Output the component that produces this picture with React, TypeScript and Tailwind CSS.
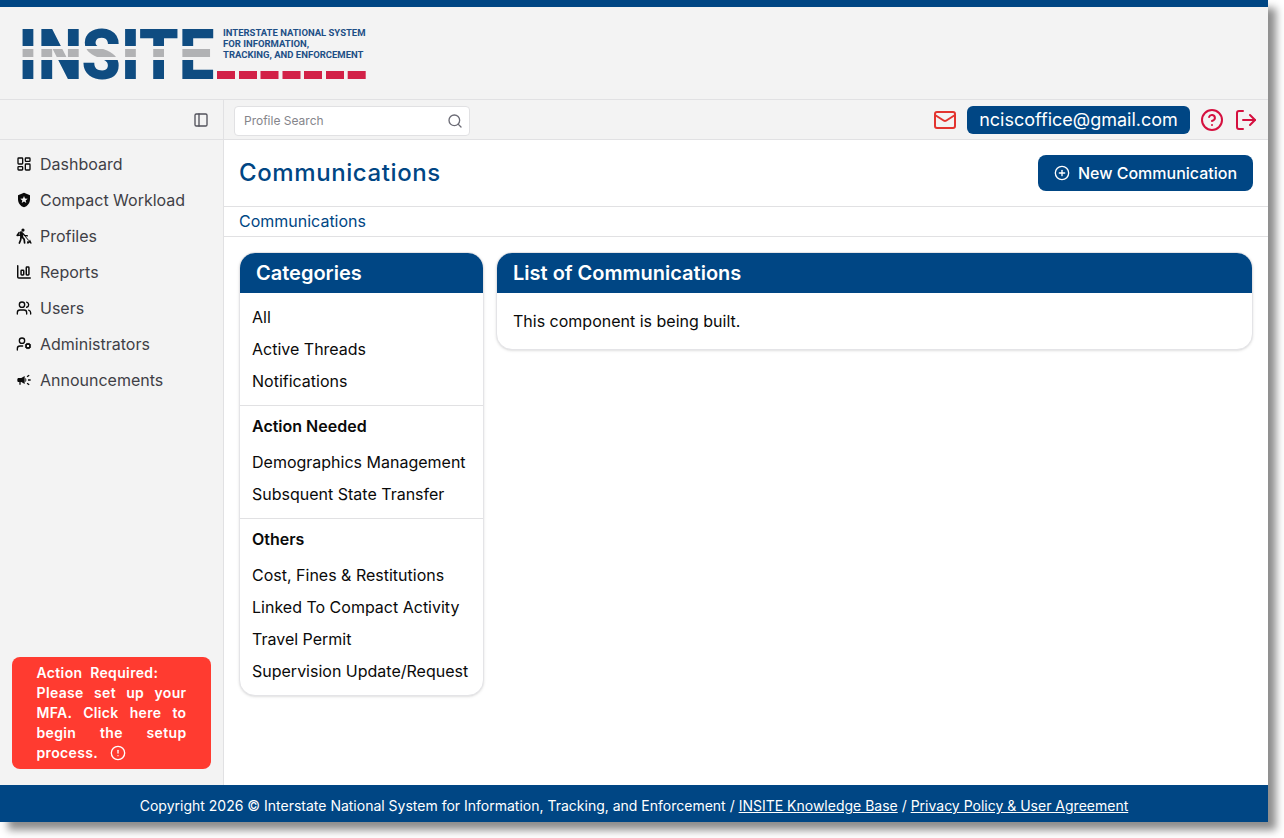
import { CirclePlus, CircleAlert, CircleHelp, LayoutDashboard, LogOut, Mail, PanelLeft, Search, UserCog, Users } from 'lucide-react'
import { MdCampaign, MdLocalPolice } from 'react-icons/md'

function WorkerIcon({ className }: { className?: string }) {
    return (
        <svg className={className} viewBox="0 0 16 16" fill="none" stroke="currentColor" strokeLinecap="round" strokeLinejoin="round">
            <circle cx="7" cy="2.1" r="1.6" fill="currentColor" stroke="none" />
            <path d="M5.1 4.9 5.7 8.6" strokeWidth="3.2" />
            <path d="M3 4.6 1.1 7.4 3.4 7.3" strokeWidth="1.5" />
            <path d="M6.6 5.2 8.6 7.4 11.2 7.8" strokeWidth="1.4" />
            <path d="M5 9.4 4.6 12 3.4 15M6.4 9.2 8.2 11.4 8.6 15" strokeWidth="1.7" />
            <path d="M8.6 7.6 12.6 12.4" strokeWidth="1" />
            <path d="m10.8 15.6.8-2.8 1.2.6 1.2-2 1.8 4.2h-1.6l-.6-1-1 1Z" fill="currentColor" stroke="none" />
        </svg>
    )
}

function ReportIcon({ className }: { className?: string }) {
    return (
        <svg className={className} viewBox="0 0 24 24" fill="none" stroke="currentColor" strokeWidth="2.2" strokeLinecap="round" strokeLinejoin="round">
            <path d="M2.6 2.6v16.8a1.6 1.6 0 0 0 1.6 1.6h17.2" />
            <rect x="7.6" y="9.5" width="4" height="7" rx="1" />
            <rect x="15.4" y="4.5" width="4" height="12" rx="1" />
        </svg>
    )
}

const navigation = [
    { name: 'Dashboard', icon: LayoutDashboard },
    { name: 'Compact Workload', icon: MdLocalPolice },
    { name: 'Profiles', icon: WorkerIcon },
    { name: 'Reports', icon: ReportIcon },
    { name: 'Users', icon: Users },
    { name: 'Administrators', icon: UserCog },
    { name: 'Announcements', icon: MdCampaign },
]

const categories = [
    { title: '', items: ['All', 'Active Threads', 'Notifications'] },
    { title: 'Action Needed', items: ['Demographics Management', 'Subsquent State Transfer'] },
    { title: 'Others', items: ['Cost, Fines & Restitutions', 'Linked To Compact Activity', 'Travel Permit', 'Supervision Update/Request'] },
]

const dashes = [217, 239, 260.5, 282.5, 304, 326, 347.7]

function Logo() {
    return (
        <svg width="380" height="92" viewBox="0 7 380 92" className="block" aria-label="INSITE">
            <defs>
                <linearGradient id="bands" gradientUnits="userSpaceOnUse" x1="0" y1="20" x2="0" y2="100">
                    <stop offset="0.3275" stopColor="#0f4c81" />
                    <stop offset="0.3275" stopColor="#f3f3f3" />
                    <stop offset="0.3625" stopColor="#f3f3f3" />
                    <stop offset="0.3625" stopColor="#b1b2b4" />
                    <stop offset="0.4625" stopColor="#b1b2b4" />
                    <stop offset="0.4625" stopColor="#f3f3f3" />
                    <stop offset="0.5" stopColor="#f3f3f3" />
                    <stop offset="0.5" stopColor="#0f4c81" />
                </linearGradient>
            </defs>
            <text transform="scale(0.89 1)" x="20.8 42.6 91.6 136 156.2 201.1" y="79" fontFamily="Roboto" fontWeight="900" fontSize="70.5" fill="url(#bands)">INSITE</text>
            <g fontFamily="Roboto" fontWeight="700" fontSize="9.9" fill="#1d4f86">
                <text x="223" y="36" textLength="142.5" lengthAdjust="spacingAndGlyphs">INTERSTATE NATIONAL SYSTEM</text>
                <text x="223" y="47" textLength="86" lengthAdjust="spacingAndGlyphs">FOR INFORMATION,</text>
                <text x="223" y="58" textLength="140.5" lengthAdjust="spacingAndGlyphs">TRACKING, AND ENFORCEMENT</text>
            </g>
            {dashes.map((x) => (
                <rect key={x} x={x} y="71" width="18" height="8" fill="#d22147" />
            ))}
        </svg>
    )
}

function Sidebar() {
    return (
        <aside className="flex w-[224px] shrink-0 flex-col border-r border-[#e1e1e3] bg-[#f3f3f3]">
            <div className="flex h-10 items-center justify-end border-b border-[#e1e1e3] pr-3.5">
                <PanelLeft className="size-4 text-[#52525b]" />
            </div>
            <nav className="flex flex-col gap-1 px-4 pt-2">
                {navigation.map((item) => (
                    <a key={item.name} className="flex h-8 items-center gap-2 text-base text-[#3f3f46]">
                        <item.icon className="size-4 shrink-0 text-[#0a0a0a]" />
                        {item.name}
                    </a>
                ))}
            </nav>
            <div className="mx-3 mt-auto mb-4 h-28 w-[199px] rounded-lg bg-[#ff3b30] py-1.5 pr-[24.5px] pl-[24.5px] text-justify text-sm leading-5 font-[560] tracking-wide text-white">
                Action&nbsp; Required:<br />
                Please set up your MFA. Click here to begin the setup process.
                <CircleAlert className="relative -top-px ml-3 inline size-4" strokeWidth={2} />
            </div>
        </aside>
    )
}

function Toolbar() {
    return (
        <div className="flex h-10 items-center border-b border-[#e1e1e3] bg-[#f3f3f3] px-2.5">
            <div className="mt-[3px] flex h-[30px] w-[236px] items-center justify-between rounded border border-[#e1e1e3] bg-white pr-1.5 pl-[9px] text-xs text-[#85858b]">
                Profile Search
                <Search className="size-4 text-[#6b6b75]" />
            </div>
            <div className="ml-auto flex items-center">
                <Mail className="size-6 text-[#e3342f]" strokeWidth={2} />
                <span className="ml-2.5 flex h-7 w-[223px] items-center justify-center rounded-md bg-[#004684] text-lg text-white">nciscoffice@gmail.com</span>
                <CircleHelp className="ml-2.5 size-6 text-[#d5103f]" />
                <LogOut className="ml-2.5 size-6 text-[#d5103f]" />
            </div>
        </div>
    )
}

function Categories() {
    return (
        <section className="w-[245px] overflow-hidden rounded-2xl border border-[#e4e4e7] bg-white shadow">
            <h2 className="h-10 bg-[#004684] px-4 text-xl leading-10 font-semibold text-white">Categories</h2>
            {categories.map((group, i) => (
                <div key={i} className={i === 0 ? 'pt-2 pb-2' : 'border-t border-[#e1e1e3] pt-1 pb-2'}>
                    {group.title && <h3 className="h-9 px-3 text-base leading-8 font-semibold">{group.title}</h3>}
                    {group.items.map((item) => (
                        <a key={item} className="block h-8 px-3 leading-8 whitespace-nowrap">{item}</a>
                    ))}
                </div>
            ))}
        </section>
    )
}

export default function App() {
    return (
        <div className="h-[838px] w-[1284px] overflow-hidden bg-white font-['Inter',sans-serif] text-base text-[#0a0a0a]">
            <div className="flex h-[822px] w-[1268px] flex-col bg-white shadow-[8px_8px_8px_rgba(0,0,0,0.45)]">
                <header className="h-[100px] shrink-0 border-t-[7px] border-b border-t-[#004684] border-b-[#e1e1e3] bg-[#f3f3f3]">
                    <Logo />
                </header>
                <div className="flex min-h-0 flex-1">
                    <Sidebar />
                    <main className="flex-1">
                        <Toolbar />
                        <div className="flex h-[67px] items-center justify-between border-b border-[#e1e1e3] px-[15px]">
                            <h1 className="text-2xl font-[540] tracking-wide text-[#004684]">Communications</h1>
                            <button className="flex h-9 w-[215px] items-center justify-center gap-2 rounded-lg bg-[#004684] font-medium text-white">
                                <CirclePlus className="size-4" />
                                New Communication
                            </button>
                        </div>
                        <div className="h-[30px] border-b border-[#e1e1e3] px-[15px] leading-[29px] text-[#004684]">Communications</div>
                        <div className="flex items-start gap-3 px-[15px] pt-[15px]">
                            <Categories />
                            <section className="flex-1 overflow-hidden rounded-2xl border border-[#e4e4e7] bg-white shadow">
                                <h2 className="h-10 bg-[#004684] px-4 text-xl leading-10 font-semibold text-white">List of Communications</h2>
                                <p className="p-4">This component is being built.</p>
                            </section>
                        </div>
                    </main>
                </div>
                <footer className="h-[37px] shrink-0 bg-[#004684] text-center text-sm leading-[41px] text-white">
                    Copyright 2026 © Interstate National System for Information, Tracking, and Enforcement / <a className="underline">INSITE Knowledge Base</a> / <a className="underline">Privacy Policy &amp; User Agreement</a>
                </footer>
            </div>
        </div>
    )
}
